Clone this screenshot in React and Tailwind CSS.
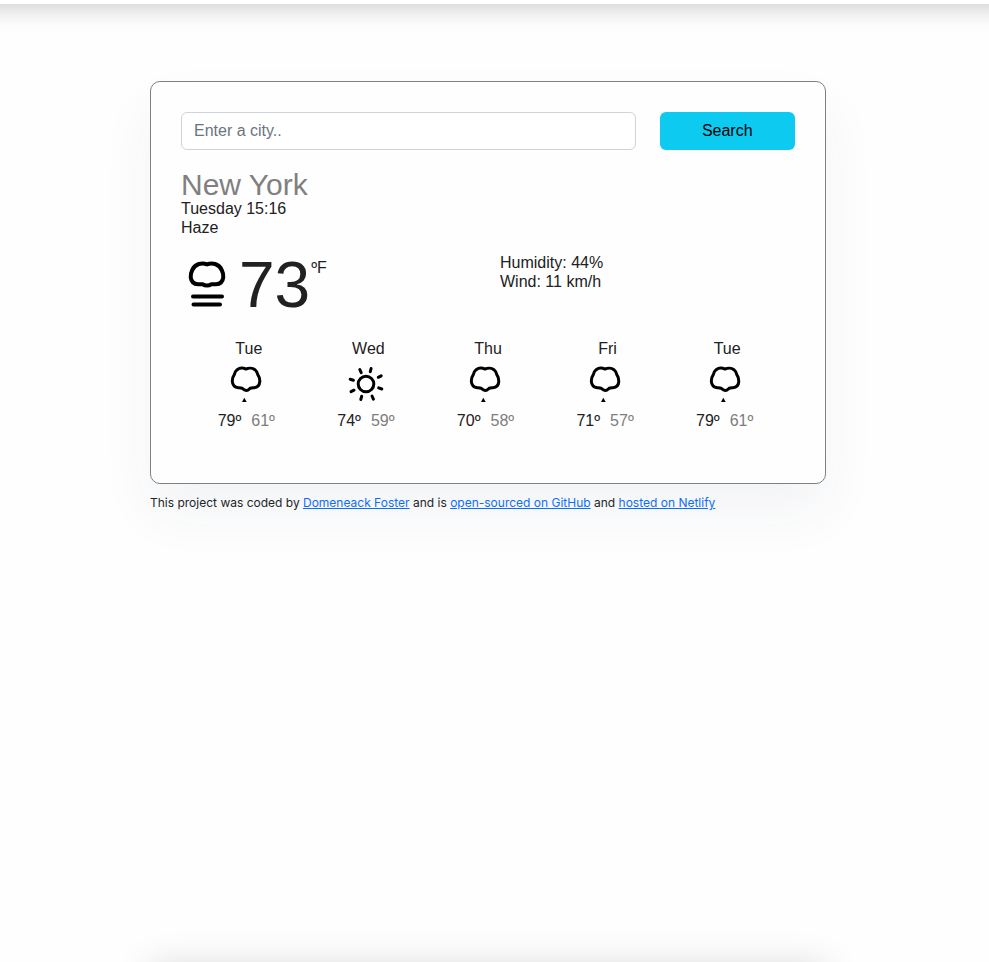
const forecast = [
  { day: "Tue", icon: "drizzle", high: 79, low: 61 },
  { day: "Wed", icon: "sun", high: 74, low: 59 },
  { day: "Thu", icon: "drizzle", high: 70, low: 58 },
  { day: "Fri", icon: "drizzle", high: 71, low: 57 },
  { day: "Tue", icon: "drizzle", high: 79, low: 61 },
];

function FogIcon() {
  return (
    <svg width="52" height="52" viewBox="0 0 52 52" fill="none" stroke="#000" strokeWidth="4" strokeLinecap="round" strokeLinejoin="round" aria-hidden="true">
      <path d="M26 7.4C23.500 6.400 20.500 6.200 17.800 7C14.500 8.100 12.300 10.400 11.200 13.200C10 15.500 9.500 18 9.700 20.300C10.200 24.500 13 27.200 17 27.300C18.800 27.300 20.300 27 21.600 27.200C23 28.100 24.500 28.400 26 28.400C27.500 28.400 29 28.100 30.400 27.200C31.700 27 33.200 27.300 35 27.300C39 27.200 41.800 24.500 42.300 20.300C42.500 18 42 15.500 40.800 13.200C39.700 10.400 37.500 8.100 34.200 7C31.500 6.200 28.500 6.400 26 7.400Z" />
      <path d="M12 39.5H41M12.500 47.500H39" />
    </svg>
  );
}

function DrizzleIcon() {
  return (
    <svg width="40" height="40" viewBox="0 0 40 40" fill="none" stroke="#000" strokeWidth="3" strokeLinejoin="round" aria-hidden="true">
      <path d="M20 6.100C17.500 4.900 13.600 4.800 11.200 6.700C9.400 8.200 8.600 9.800 8.300 11.700C6.800 13.800 6.200 16 6.300 18.300C6.500 21.800 8.800 24.400 12.300 24.800C13.700 24.900 14.900 24.900 16 25.200C17.300 26.300 18.700 27.400 20.300 27.500C22 27.400 23 26.300 24.200 25.200C25.300 24.900 26.500 24.900 27.900 24.800C31.400 24.400 33.600 21.800 33.800 18.300C33.900 16 33.300 13.800 31.800 11.700C31.500 9.800 30.700 8.200 28.900 6.700C26.500 4.800 22.500 4.900 20 6.100Z" />
      <path d="M18.300 34.700L20.700 39H16Z" fill="#000" stroke="none" />
    </svg>
  );
}

function SunIcon() {
  return (
    <svg width="40" height="40" viewBox="0 0 40 40" fill="none" stroke="#000" strokeWidth="3" strokeLinecap="round" aria-hidden="true">
      <circle cx="20" cy="21" r="7.8" />
      <path d="M24.300 8.700L25.100 5.500M32.300 14.300L35.200 12.800M32.700 24.900L35.800 26M26 33L27.400 36.200M15.700 33.200L14.800 36.500M8 27.200L5 28.700M7.400 17.200L4.200 16.200M15.200 9.600L13.800 6.500" />
    </svg>
  );
}

function Day({ day, icon, high, low }) {
  return (
    <li className="text-center">
      <div>{day}</div>
      <div className="pr-[5px]">
        <div className="flex justify-center pt-[5px] pb-2">
          {icon === "sun" ? <SunIcon /> : <DrizzleIcon />}
        </div>
        <div className="flex justify-center gap-2.5">
          <span>{high}º</span>
          <span className="text-[#7d7d7d]">{low}º</span>
        </div>
      </div>
    </li>
  );
}

function FooterLink({ children }) {
  return (
    <a href="#" className="text-[#0d6efd] underline">
      {children}
    </a>
  );
}

export default function App() {
  return (
    <div className="flex min-h-screen flex-col overflow-hidden bg-[#fefefe] font-['Liberation_Sans',Arial,sans-serif] text-base leading-[19px] text-[#212121]">
      <header className="-mx-10 -mt-9 h-10 shrink-0 bg-white shadow-[0_4px_24px_rgba(0,0,0,0.2)]" />

      <div className="grow pt-[77px] pr-[13px]">
        <div className="mx-auto max-w-[676px]">
          <main className="rounded-[10px] border border-[#808080] bg-[#fefefe] px-[30px] pt-[30px] pb-[53px] shadow-[0_28px_56px_rgba(40,60,90,0.055)]">
            <form className="grid grid-cols-12 gap-6" onSubmit={(e) => e.preventDefault()}>
              <input
                type="search"
                aria-label="City"
                placeholder="Enter a city.."
                className="col-span-9 h-[38px] min-w-0 rounded-md border border-[#ced4da] bg-white px-3 placeholder:text-[#6c757d]"
              />
              <button type="submit" className="col-span-3 h-[38px] rounded-md bg-[#0dcaf0] pb-0.5 text-black">
                Search
              </button>
            </form>

            <h1 className="mt-[21px] text-[30px] leading-7 text-[#808080]">New York</h1>
            <p>Tuesday 15:16</p>
            <p>Haze</p>

            <div className="mt-4 grid grid-cols-2 gap-6">
              <div className="flex items-start">
                <div className="pt-1">
                  <FogIcon />
                </div>
                <span className="ml-1.5 text-[64px] leading-[64px]">73</span>
                <span className="pt-[5px] pl-px">ºF</span>
              </div>
              <div>
                <p>Humidity: 44%</p>
                <p>Wind: 11 km/h</p>
              </div>
            </div>

            <ul className="mx-2 mt-[22px] grid grid-cols-5">
              {forecast.map((item, i) => (
                <Day key={i} {...item} />
              ))}
            </ul>
          </main>

          <footer className="mt-2.5 font-[Inter,sans-serif] text-xs leading-[18px] text-[#212529]">
            This project was coded by <FooterLink>Domeneack Foster</FooterLink> and is{" "}
            <FooterLink>open-sourced on GitHub</FooterLink> and <FooterLink>hosted on Netlify</FooterLink>
          </footer>
        </div>
      </div>

      <div className="-mb-10 shrink-0 pr-[13px]">
        <div className="mx-auto h-10 max-w-[676px] bg-white shadow-[0_4px_36px_rgba(0,0,0,0.15)]" />
      </div>
    </div>
  );
}
